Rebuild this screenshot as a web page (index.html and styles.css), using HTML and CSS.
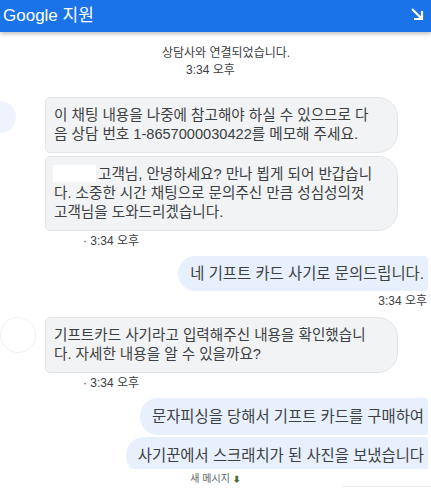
FILE: index.html
```html
<!DOCTYPE html>
<html lang="ko">
<head>
  <meta charset="UTF-8">
  <meta name="viewport" content="width=device-width, initial-scale=1.0">
  <title>Google 지원</title>
  <link rel="stylesheet" href="styles.css">
</head>
<body>

  <div class="topbar">
    <span class="topbar-title">Google 지원</span>
    <svg class="topbar-icon" width="14" height="14" viewBox="0 0 14 14">
      <path d="M2 2 L12 12 M12 4 V12 H4" fill="none" stroke="#fff" stroke-width="2.2"/>
    </svg>
  </div>

  <div class="chat">

    <div class="system">
      <div>상담사와 연결되었습니다.</div>
      <div class="system-time">3:34 오후</div>
    </div>

    <div class="group group-agent group-first">
      <div class="avatar avatar-blue"></div>
      <div class="bubbles">
        <div class="bubble bubble-agent">이 채팅 내용을 나중에 참고해야 하실 수 있으므로 다<br>음 상담 번호 1-8657000030422를 메모해 주세요.</div>
        <div class="bubble bubble-agent"><span class="redacted"></span>고객님, 안녕하세요? 만나 뵙게 되어 반갑습니<br>다. 소중한 시간 채팅으로 문의주신 만큼 성심성의껏<br>고객님을 도와드리겠습니다.</div>
        <div class="time time-agent">· 3:34 오후</div>
      </div>
    </div>

    <div class="group group-user">
      <div class="bubble bubble-user">네 기프트 카드 사기로 문의드립니다.</div>
      <div class="time time-user">3:34 오후</div>
    </div>

    <div class="group group-agent">
      <div class="avatar avatar-ring"></div>
      <div class="bubbles">
        <div class="bubble bubble-agent">기프트카드 사기라고 입력해주신 내용을 확인했습니<br>다. 자세한 내용을 알 수 있을까요?</div>
        <div class="time time-agent">· 3:34 오후</div>
      </div>
    </div>

    <div class="group group-user">
      <div class="bubble bubble-user bubble-tall">문자피싱을 당해서 기프트 카드를 구매하여</div>
      <div class="bubble bubble-user bubble-tall">사기꾼에서 스크래치가 된 사진을 보냈습니다</div>
    </div>

  </div>

  <div class="footer">
    <span class="new-msg">새 메시지 <b>⬇</b></span>
    <div class="footer-line"></div>
  </div>

</body>
</html>
```

FILE: styles.css
```css
* {
  box-sizing: border-box;
}
html, body {
  height: 489px;
  overflow: hidden;
}
body {
  margin: 0;
  padding: 0;
  background: #fff;
  font-family: "Liberation Sans", "Noto Sans CJK KR", sans-serif;
  font-size: 14px;
  color: #3c4043;
}

.topbar {
  height: 32px;
  background: #1a73e8;
  color: #fff;
  display: flex;
  align-items: center;
  justify-content: space-between;
  padding: 0 7px 0 3px;
  box-shadow: 0 2px 4px rgba(0, 0, 0, 0.25);
  position: relative;
  z-index: 2;
}
.topbar-title {
  font-size: 17px;
  line-height: 20px;
}
.topbar-icon {
  display: block;
  margin-top: -4px;
}

.chat {
  height: 437px;
  overflow: hidden;
}

.system {
  font-size: 12px;
  line-height: 17px;
  padding: 13px 0 0 162px;
  margin-bottom: 2px;
}
.system-time {
  padding-left: 24px;
}

.group-agent {
  display: flex;
  padding-top: 8px;
}
.group-first {
  padding-top: 16px;
}
.avatar {
  width: 32px;
  height: 32px;
  border-radius: 50%;
  flex-shrink: 0;
}
.avatar-blue {
  background: #eef3fd;
  margin: 4px 29px 0 -16px;
}
.avatar-ring {
  width: 36px;
  height: 36px;
  margin: 0 9px 0 0;
  border: 1px solid #eef0f2;
}
.bubbles {
  width: 353px;
  display: flex;
  flex-direction: column;
  gap: 3px;
}

.bubble {
  line-height: 19px;
  white-space: nowrap;
}
.bubble-agent {
  font-size: 14.6px;
  padding: 8px 8px;
  background: #f1f3f4;
  border: 1px solid #e3e5e8;
  border-radius: 5px 20px 20px 5px;
}
.bubble-user {
  font-size: 15.4px;
  background: #e8f0fe;
  border-radius: 18px 4px 4px 18px;
  padding: 8px 4px 8px 12px;
  margin-right: 3px;
}
.bubble-tall {
  padding-top: 9px;
  padding-bottom: 9px;
}

.redacted {
  display: inline-block;
  width: 43px;
  height: 17px;
  background: #fff;
  vertical-align: -3px;
  margin-left: -1px;
  margin-right: 2px;
}

.time {
  font-size: 12px;
  line-height: 14px;
}
.time-agent {
  padding-left: 38px;
}
.time-user {
  text-align: right;
  line-height: 16px;
  padding: 0 4px 0 0;
}

.group-user {
  display: flex;
  flex-direction: column;
  align-items: flex-end;
  gap: 2px;
  padding-top: 8px;
}

.footer {
  height: 20px;
  font-size: 10px;
  color: #5f6368;
}
.new-msg {
  display: block;
  text-align: center;
  padding: 4px 0 0 0;
  line-height: 12px;
}
.new-msg b {
  font-size: 8px;
  color: #4b6b3a;
}
.footer-line {
  width: 88px;
  margin-left: auto;
  margin-top: 0;
  border-top: 1px solid #e8eaed;
}
```
